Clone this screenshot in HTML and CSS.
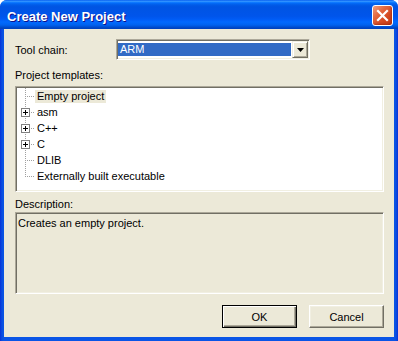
FILE: index.html
```html
<!DOCTYPE html>
<html lang="en">
<head>
    <meta charset="UTF-8">
    <title>Create New Project</title>
    <link rel="stylesheet" href="styles.css">
</head>
<body>
    <div class="window">
        <div class="titlebar">
            <span class="title">Create New Project</span>
            <button class="close-btn" aria-label="Close">
                <svg width="13" height="13" viewBox="0 0 13 13">
                    <path d="M2 2L11 11M11 2L2 11" stroke="#fff" stroke-width="2.2" stroke-linecap="square"/>
                </svg>
            </button>
        </div>

        <div class="client">
            <div class="field-row">
                <span class="field-label">Tool chain:</span>
                <div class="combo">
                    <div class="combo-value"><span class="combo-sel">ARM</span></div>
                    <div class="combo-arrow">
                        <svg width="7" height="4" viewBox="0 0 7 4"><polygon points="0,0 7,0 3.5,4" fill="#000"/></svg>
                    </div>
                </div>
            </div>

            <div class="group-label">Project templates:</div>
            <div class="tree">
                <div class="node first">
                    <span class="twig"></span>
                    <span class="node-label selected">Empty project</span>
                </div>
                <div class="node">
                    <span class="twig">
                        <svg class="plus" width="9" height="9" viewBox="0 0 9 9"><rect x="0.5" y="0.5" width="8" height="8" fill="#fff" stroke="#808080"/><path d="M2 4.5H7M4.5 2V7" stroke="#000"/></svg>
                    </span>
                    <span class="node-label">asm</span>
                </div>
                <div class="node">
                    <span class="twig">
                        <svg class="plus" width="9" height="9" viewBox="0 0 9 9"><rect x="0.5" y="0.5" width="8" height="8" fill="#fff" stroke="#808080"/><path d="M2 4.5H7M4.5 2V7" stroke="#000"/></svg>
                    </span>
                    <span class="node-label">C++</span>
                </div>
                <div class="node">
                    <span class="twig">
                        <svg class="plus" width="9" height="9" viewBox="0 0 9 9"><rect x="0.5" y="0.5" width="8" height="8" fill="#fff" stroke="#808080"/><path d="M2 4.5H7M4.5 2V7" stroke="#000"/></svg>
                    </span>
                    <span class="node-label">C</span>
                </div>
                <div class="node">
                    <span class="twig"></span>
                    <span class="node-label">DLIB</span>
                </div>
                <div class="node last">
                    <span class="twig"></span>
                    <span class="node-label">Externally built executable</span>
                </div>
            </div>

            <div class="group-label desc-label">Description:</div>
            <div class="desc">Creates an empty project.</div>

            <div class="buttons">
                <button class="btn default">OK</button>
                <button class="btn">Cancel</button>
            </div>
        </div>
    </div>
</body>
</html>
```

FILE: styles.css
```css
body {
    margin: 0;
    background: #fff;
    font-family: "Liberation Sans", Arial, sans-serif;
    font-size: 11px;
    color: #000;
}
.window {
    width: 398px;
    height: 341px;
    display: flex;
    flex-direction: column;
    border-radius: 7px 7px 0 0;
    overflow: hidden;
    background: linear-gradient(to right, #0831D9 0, #0A4FE0 2px, #0A55E6 4px, #0A55E6 394px, #0A4FE0 396px, #0831D9 398px);
}
.titlebar {
    flex: none;
    height: 29px;
    box-sizing: border-box;
    padding: 5px 5px 0 7px;
    display: flex;
    align-items: flex-start;
    justify-content: space-between;
    background: linear-gradient(to bottom, #0058EE 0%, #3593FF 4%, #288EFF 6%, #127DFF 8%, #036FFC 10%, #0262EE 14%, #0057E5 20%, #0054E3 24%, #0055EB 56%, #005BF5 66%, #026AFE 76%, #0062EF 86%, #0052D6 92%, #0046C4 96%, #0041BC 100%);
}
.title {
    color: #fff;
    font-weight: bold;
    font-size: 13px;
    line-height: 21px;
    margin-top: 1px;
    text-shadow: 1px 1px #0F1089;
}
.close-btn {
    width: 21px;
    height: 21px;
    padding: 0;
    border: 1px solid #fff;
    border-radius: 3px;
    display: flex;
    align-items: center;
    justify-content: center;
    background: linear-gradient(135deg, #F3A07E 0%, #E4683F 35%, #D54A22 65%, #C13A18 100%);
    box-shadow: inset -1px -1px 2px rgba(120, 20, 0, 0.4);
}
.client {
    flex: 1;
    margin: 0 4px 4px;
    padding: 10px 10px 0 11px;
    background: #ECE9D8;
    display: flex;
    flex-direction: column;
}
.field-row {
    display: flex;
    align-items: center;
    height: 21px;
}
.field-label {
    width: 101px;
}
.combo {
    width: 194px;
    height: 21px;
    box-sizing: border-box;
    display: flex;
    background: #fff;
    border: 1px solid;
    border-color: #ACA899 #fff #fff #ACA899;
    box-shadow: inset 1px 1px #716F64, inset -1px -1px #F1EFE2;
    padding: 1px;
}
.combo-value {
    flex: 1;
    padding: 2px 1px 2px 0;
    display: flex;
}
.combo-sel {
    flex: 1;
    background: #316AC5;
    color: #fff;
    line-height: 13px;
    padding-left: 2px;
}
.combo-arrow {
    width: 16px;
    box-sizing: border-box;
    display: flex;
    align-items: center;
    justify-content: center;
    background: #ECE9D8;
    border: 1px solid;
    border-color: #F1EFE2 #716F64 #716F64 #F1EFE2;
    box-shadow: inset 1px 1px #fff, inset -1px -1px #ACA899;
}
.group-label {
    line-height: 13px;
    margin-top: 9px;
}
.tree {
    margin-top: 4px;
    height: 106px;
    box-sizing: border-box;
    background: #fff;
    border: 1px solid;
    border-color: #ACA899 #fff #fff #ACA899;
    box-shadow: inset 1px 1px #716F64, inset -1px -1px #F1EFE2;
    padding: 1px;
}
.node {
    height: 16px;
    display: flex;
    align-items: center;
}
.twig {
    position: relative;
    width: 18px;
    height: 16px;
    flex: none;
}
.twig::before {
    content: "";
    position: absolute;
    left: 8px;
    top: 0;
    width: 1px;
    height: 16px;
    background: repeating-linear-gradient(to bottom, #A0A0A0 0 1px, transparent 1px 2px);
}
.node.last .twig::before {
    height: 9px;
}
.twig::after {
    content: "";
    position: absolute;
    left: 8px;
    top: 8px;
    width: 10px;
    height: 1px;
    background: repeating-linear-gradient(to right, #A0A0A0 0 1px, transparent 1px 2px);
}
.plus {
    position: absolute;
    left: 4px;
    top: 4px;
    z-index: 1;
}
.node-label {
    line-height: 13px;
    padding: 0 2px;
}
.node-label.selected {
    background: #ECE9D8;
}
.desc-label {
    margin-top: 6px;
}
.desc {
    margin-top: 1px;
    height: 82px;
    box-sizing: border-box;
    border: 1px solid;
    border-color: #ACA899 #fff #fff #ACA899;
    box-shadow: inset 1px 1px #716F64, inset -1px -1px #F1EFE2;
    padding: 4px 2px;
    line-height: 13px;
}
.buttons {
    margin-top: 11px;
    display: flex;
    justify-content: flex-end;
    gap: 12px;
}
.btn {
    width: 75px;
    height: 23px;
    padding: 0;
    font: inherit;
    color: #000;
    background: #ECE9D8;
    border: 1px solid;
    border-color: #fff #716F64 #716F64 #fff;
    box-shadow: inset -1px -1px #ACA899, inset 1px 1px #F1EFE2;
}
.btn.default {
    border-color: #000;
    box-shadow: inset 1px 1px #fff, inset -1px -1px #716F64, inset -2px -2px #ACA899;
}
```
